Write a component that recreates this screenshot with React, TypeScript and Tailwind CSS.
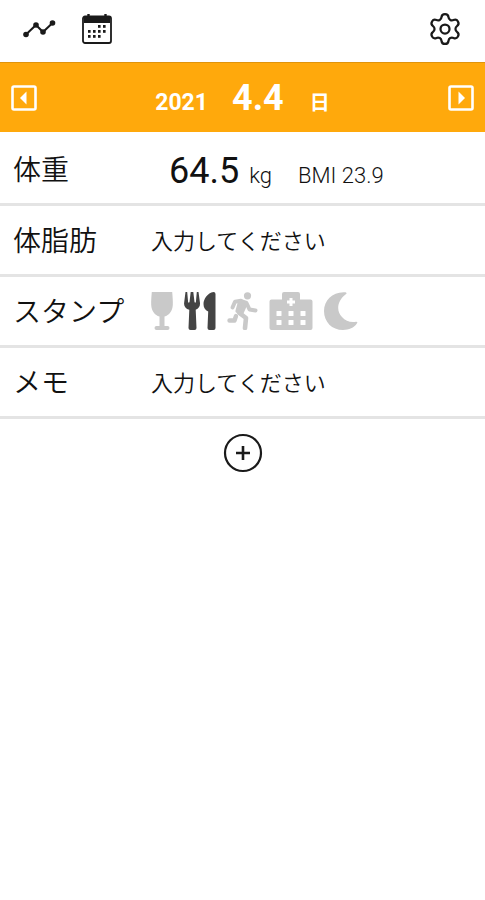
import { useState } from 'react'
import type { ReactNode } from 'react'
import { Settings } from 'lucide-react'

function TrendIcon(){
  return (
    <svg width="34" height="20" viewBox="0 0 34 20" fill="#1a1a1a" aria-hidden="true">
      <path d="M4 15.500 14 6l7 7 9.500-9" fill="none" stroke="#1a1a1a" strokeWidth="2" />
      <circle cx="4" cy="15.500" r="2.800" />
      <circle cx="14" cy="6" r="2.800" />
      <circle cx="21" cy="13" r="2.800" />
      <circle cx="30.500" cy="4" r="2.800" />
    </svg>
  )
}

function CalendarIcon(){
  const dots = [[17, 11], [22, 11], [7, 16], [12, 16], [17, 16], [22, 16], [7, 21], [12, 21], [17, 21]]
  return (
    <svg width="30" height="30" viewBox="0 0 30 30" aria-hidden="true">
      <rect x="1" y="2.5" width="28" height="26.5" rx="2" fill="#fff" stroke="#1a1a1a" strokeWidth="1.8" />
      <path d="M2 3h26v6H2z" fill="#1a1a1a" />
      <path d="M6.500 0v4M23.500 0v4" stroke="#1a1a1a" strokeWidth="2.4" />
      {dots.map(([x, y]) => <rect key={`${x}-${y}`} x={x - 1} y={y} width="2.6" height="2.8" fill="#1a1a1a" />)}
    </svg>
  )
}

function ArrowBox({ flip }: { flip?: boolean }){
  return (
    <svg width="26" height="26" viewBox="0 0 26 26" className={flip ? 'rotate-180' : ''} aria-hidden="true">
      <rect x="1.5" y="1.5" width="23" height="23" rx="1.5" fill="none" stroke="#fff" strokeWidth="2.6" />
      <path d="M9 13l6.500-6.500v13z" fill="#fff" />
    </svg>
  )
}

function GlassIcon(){
  return (
    <svg width="22" height="38" viewBox="0 0 22 38" fill="currentColor" aria-hidden="true">
      <path d="M.8 0h20.400c.4 5 .8 9 .6 13-.4 6-3.600 10.300-8.300 11.500V34h3q2 0 2 2t-2 2h-11q-2 0-2-2t2-2h3v-9.500C3.800 23.300.6 19 .2 13 0 9 .4 5 .8 0z" />
    </svg>
  )
}

function CutleryIcon(){
  return (
    <svg width="32" height="38" viewBox="0 0 32 38" fill="currentColor" aria-hidden="true">
      <path d="M1.500 0h1.700l.9 10q.7 1.500 1.400 0L6.700 0h2.600l1.200 10q.7 1.500 1.400 0l.9-10h1.700l1.500 11c.2 3.500-1.300 5.600-4.300 6.800L12.500 36q0 2-2 2h-4q-2 0-2-2l.8-18.200C1.800 16.600-.2 14.500.1 11z" />
      <path d="M29.500 0q2 0 2 2v34q0 2-2 2h-4q-2 0-2-2l.7-16.500c-3.200-1.500-4.700-4-4.700-7.500 0-5 4-11 10-12z" />
    </svg>
  )
}

function RunIcon(){
  return (
    <svg width="31" height="38" viewBox="0 0 31 38" fill="currentColor" stroke="currentColor" strokeLinecap="round" strokeLinejoin="round" aria-hidden="true">
      <circle cx="20.500" cy="3.800" r="3.600" stroke="none" />
      <path d="M5.500 15.500 8 9.800l6-1" fill="none" strokeWidth="4" />
      <path d="M15 9.500l4.500 1.500 3 6.500 6 1" fill="none" strokeWidth="4" />
      <path d="M13 10l5.500 2-4.500 10-3.500-3z" strokeWidth="4.200" />
      <path d="M12.500 21l6.500 5-1 10" fill="none" strokeWidth="4.600" />
      <path d="M9 24l-1.500 4.500H2.500" fill="none" strokeWidth="4.400" />
    </svg>
  )
}

function HospitalIcon(){
  return (
    <svg width="44" height="38" viewBox="0 0 44 38" aria-hidden="true">
      <path d="M2.500 7.500H13V2q0-2 2-2h14q2 0 2 2v5.500h10.500q2 0 2 2V36q0 2-2 2h-39q-2 0-2-2V9.500q0-2 2-2z" fill="currentColor" />
      <path d="M20.500 6h3v2.500H26v3h-2.500V14h-3v-2.500H18v-3h2.500z" fill="#fff" />
      {[19, 28].map(y => [7.5, 19.5, 31.5].map(x => (
        <rect key={`${x}-${y}`} x={x} y={y} width="5" height="5" rx=".5" fill="#fff" />
      )))}
    </svg>
  )
}

function MoonIcon(){
  return (
    <svg width="34" height="38" viewBox="0 0 34 38" fill="currentColor" aria-hidden="true">
      <path d="M21.500.3q2 .7.3 2C13 9 12 19 18 25c3.500 4 8.500 5.800 14 4.800q2-.1 1 1.500C30 36 25 38 19 38 8 38 0 30 0 19S9-.7 21.500.3z" />
    </svg>
  )
}

function Row({ label, htmlFor, children }: { label: string; htmlFor?: string; children: ReactNode }){
  const labelClass = 'w-[138px] shrink-0 pt-1 text-[28px] leading-8'
  return (
    <div className="flex h-[71px] items-center border-b-[3px] border-[#e4e4e4] pl-[13px]">
      {htmlFor ? <label htmlFor={htmlFor} className={labelClass}>{label}</label> : <span className={labelClass}>{label}</span>}
      {children}
    </div>
  )
}

const stamps = [
  { id: 'drink', name: '飲み会', icon: <GlassIcon /> },
  { id: 'meal', name: '外食', icon: <CutleryIcon /> },
  { id: 'run', name: '運動', icon: <RunIcon /> },
  { id: 'hospital', name: '病院', icon: <HospitalIcon /> },
  { id: 'moon', name: '夜', icon: <MoonIcon /> },
]

export default function App(){
  const [selected, setSelected] = useState('meal')
  const inputClass = 'min-w-0 flex-1 bg-transparent pt-1 text-[22px] leading-8 outline-none placeholder:text-[#111] placeholder:opacity-100'
  return (
    <main className="min-h-screen bg-white font-[Roboto,'Noto_Sans_CJK_JP',sans-serif] font-[350] text-[#111]">
      <header className="flex h-[62px] items-center px-[22px] pb-1">
        <button type="button" aria-label="グラフ"><TrendIcon /></button>
        <button type="button" aria-label="カレンダー" className="ml-[26px]"><CalendarIcon /></button>
        <button type="button" aria-label="設定" className="ml-auto"><Settings size={36} strokeWidth={1.5} color="#1a1a1a" /></button>
      </header>

      <div className="flex h-[70px] items-center justify-between border-t border-[#e0940c] bg-[#ffa90c] px-[11px] text-white">
        <button type="button" aria-label="前の日"><ArrowBox /></button>
        <div className="flex items-baseline pt-1.5 font-bold">
          <span className="text-[23px] leading-10">2021</span>
          <span className="ml-6 text-4xl leading-10">4.4</span>
          <span className="ml-[26px] text-[20px] leading-10">日</span>
        </div>
        <button type="button" aria-label="次の日"><ArrowBox flip /></button>
      </div>

      <div className="pt-[3px]">
        <Row label="体重">
          <div className="flex items-baseline pt-1 pl-[18px]">
            <span className="text-4xl leading-10 font-normal">64.5</span>
            <span className="ml-[10px] text-[22px] font-light">kg</span>
            <span className="ml-[26px] text-[22px] font-light">BMI 23.9</span>
          </div>
        </Row>
        <Row label="体脂肪" htmlFor="fat">
          <input id="fat" type="text" placeholder="入力してください" className={inputClass} />
        </Row>
        <Row label="スタンプ">
          <div className="flex items-center gap-[11px]">
            {stamps.map(s => (
              <button
                key={s.id}
                type="button"
                aria-label={s.name}
                aria-pressed={selected === s.id}
                onClick={()=> setSelected(s.id)}
                className={selected === s.id ? 'text-[#444]' : 'text-[#c9c9c9]'}
              >
                {s.icon}
              </button>
            ))}
          </div>
        </Row>
        <Row label="メモ" htmlFor="memo">
          <input id="memo" type="text" placeholder="入力してください" className={inputClass} />
        </Row>
      </div>

      <div className="flex justify-center pt-[14px]">
        <button type="button" aria-label="項目を追加">
          <svg width="40" height="40" viewBox="0 0 40 40" fill="none" stroke="#1a1a1a" aria-hidden="true">
            <circle cx="20" cy="20" r="18" strokeWidth="2.2" />
            <path d="M20 13v14M13 20h14" strokeWidth="2.6" />
          </svg>
        </button>
      </div>
    </main>
  )
}
